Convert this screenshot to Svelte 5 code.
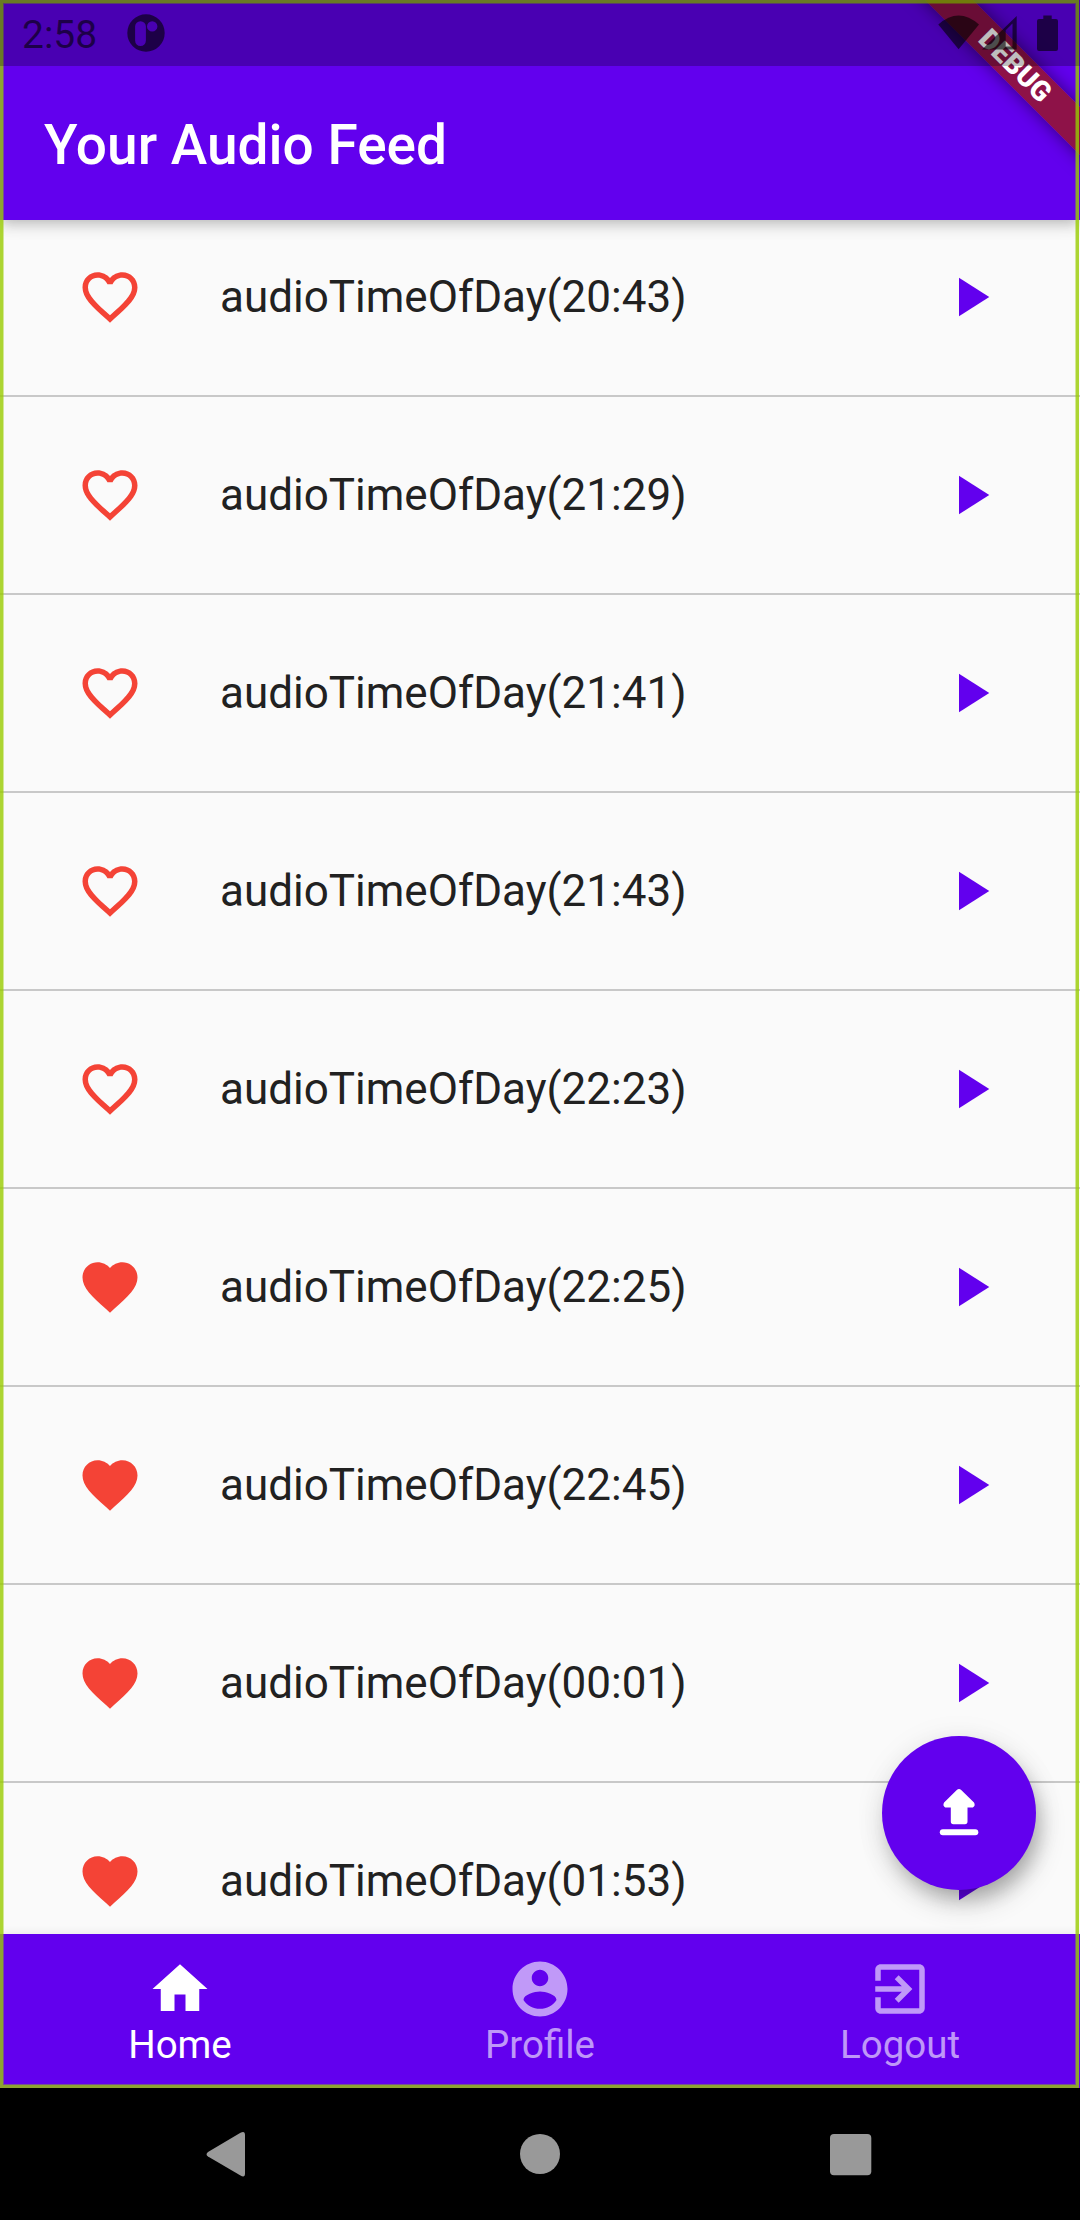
<script>
  const feed = [
    { time: '20:43', liked: false },
    { time: '21:29', liked: false },
    { time: '21:41', liked: false },
    { time: '21:43', liked: false },
    { time: '22:23', liked: false },
    { time: '22:25', liked: true },
    { time: '22:45', liked: true },
    { time: '00:01', liked: true },
    { time: '01:53', liked: true },
  ];

  const tabs = [
    { label: 'Home', active: true, icon: 'M10 20v-6h4v6h5v-8h3L12 3 2 12h3v8z' },
    {
      label: 'Profile',
      active: false,
      icon: 'M12 2C6.48 2 2 6.48 2 12s4.48 10 10 10 10-4.48 10-10S17.52 2 12 2zm0 3c1.66 0 3 1.34 3 3s-1.34 3-3 3-3-1.34-3-3 1.34-3 3-3zm0 14.2c-2.5 0-4.71-1.28-6-3.22.03-1.99 4-3.08 6-3.08 1.99 0 5.97 1.09 6 3.08-1.29 1.94-3.5 3.22-6 3.22z',
    },
    {
      label: 'Logout',
      active: false,
      icon: 'M10.09 15.59L11.5 17l5-5-5-5-1.41 1.41L12.67 11H3v2h9.67l-2.58 2.59zM19 3H5c-1.11 0-2 .9-2 2v4h2V5h14v14H5v-4H3v4c0 1.1.89 2 2 2h14c1.1 0 2-.9 2-2V5c0-1.1-.9-2-2-2z',
    },
  ];

  const heartFilled =
    'M12 21.35l-1.45-1.32C5.4 15.36 2 12.28 2 8.5 2 5.42 4.42 3 7.5 3c1.74 0 3.41.81 4.5 2.09C13.09 3.81 14.76 3 16.5 3 19.58 3 22 5.42 22 8.5c0 3.78-3.4 6.86-8.55 11.54L12 21.35z';
  const heartOutline =
    'M16.5 3c-1.74 0-3.41.81-4.5 2.09C10.91 3.81 9.24 3 7.5 3 4.42 3 2 5.42 2 8.5c0 3.78 3.4 6.86 8.55 11.54L12 21.35l1.45-1.32C18.6 15.36 22 12.28 22 8.5 22 5.42 19.58 3 16.5 3zm-4.4 15.55l-.1.1-.1-.1C7.14 14.24 4 11.39 4 8.5 4 6.5 5.5 5 7.5 5c1.54 0 3.04.99 3.57 2.36h1.87C13.46 5.99 14.96 5 16.5 5c2 0 3.5 1.5 3.5 3.5 0 2.89-3.14 5.74-7.9 10.05z';
</script>

<div class="device">
  <div class="app">
    <header class="appbar"><h1>Your Audio Feed</h1></header>

    <main class="feed">
      {#each feed as item}
        <div class="row">
          <svg class="icon heart" viewBox="0 0 24 24"><path d={item.liked ? heartFilled : heartOutline} /></svg>
          <span class="title">audioTimeOfDay({item.time})</span>
          <svg class="icon play" viewBox="0 0 24 24"><path d="M8 5v14l11-7z" /></svg>
        </div>
      {/each}
    </main>

    <nav class="tabs">
      {#each tabs as tab}
        <div class="tab" class:active={tab.active}>
          <svg class="icon" viewBox="0 0 24 24"><path d={tab.icon} /></svg>
          <span>{tab.label}</span>
        </div>
      {/each}
    </nav>

    <div class="fab">
      <svg viewBox="0 0 154 154">
        <path d="M74.8 54q2.200-2 4.400 0L92 66.600q1.800 3.400-1.200 5H85.500v14q0 2.600-2.600 2.600H71.400q-2.600 0-2.600-2.600v-14h-5.500q-3-1.600-1.200-5z" />
        <rect x="57.800" y="93.300" width="38.500" height="6" rx="3" />
      </svg>
    </div>

    <div class="ribbon-clip"><div class="ribbon">DEBUG</div></div>
    <div class="frame"></div>

    <div class="status">
      <span class="clock">2:58</span>
      <svg class="notice" viewBox="0 0 38 38">
        <path fill-rule="evenodd" d="M19 .3a18.700 18.700 0 1 0 0 37.400a18.700 18.700 0 1 0 0-37.400zM13.500 7.200a5.400 5.400 0 0 1 5.400 5.400v14a5.400 5.400 0 0 1-10.800 0v-14a5.400 5.400 0 0 1 5.400-5.400zM25.200 7.200a5.200 5.200 0 1 1 0 10.400a5.200 5.200 0 1 1 0-10.400z" />
      </svg>
      <svg class="signals" viewBox="0 0 120 40">
        <path d="M0.300 11.500Q20.600-6.500 41 11.500L20.600 36.300z" />
        <path fill-rule="evenodd" d="M78.700 3v33.500H44zM74.500 10.500v23h-6.800V17.300z" />
        <path d="M99 8q0-2 2-2h4.300V2.500h8.400V6H118q2 0 2 2V36q0 2-2 2H101q-2 0-2-2z" />
      </svg>
    </div>
  </div>

  <div class="sysnav">
    <svg viewBox="0 0 1080 132">
      <path d="M240.500 44.700Q245 42.500 245 47V85.500Q245 90 240.500 87.500L208 68.500Q205 66.300 208 64z" />
      <circle cx="540" cy="66" r="20" />
      <rect x="830" y="46" width="41.300" height="41.300" rx="4" />
    </svg>
  </div>
</div>

<style>
  :global(body) {
    margin: 0;
    background: #000;
  }
  .device {
    width: 1080px;
    height: 2220px;
    display: flex;
    flex-direction: column;
    overflow: hidden;
    background: #000;
    font-family: Roboto, 'Liberation Sans', sans-serif;
  }
  .app {
    position: relative;
    height: 2088px;
    display: flex;
    flex-direction: column;
    background: #fafafa;
  }
  .appbar {
    box-sizing: border-box;
    flex: none;
    height: 220px;
    padding: 69px 44px 0;
    display: flex;
    align-items: center;
    background: #6200ee;
    color: #fff;
    position: relative;
    z-index: 1;
    box-shadow: 0 5px 11px -3px rgba(0, 0, 0, 0.16), 0 8px 14px rgba(0, 0, 0, 0.08), 0 3px 20px rgba(0, 0, 0, 0.06);
  }
  h1 {
    margin: 0;
    font-size: 55px;
    font-weight: 500;
    line-height: 64px;
  }
  .feed {
    flex: 1;
    min-height: 0;
    overflow: hidden;
    display: flex;
    flex-direction: column;
    margin-top: -21px;
  }
  .row {
    box-sizing: border-box;
    flex: none;
    height: 198px;
    border-bottom: 2px solid #c8c8c8;
    padding: 0 77px;
    display: flex;
    align-items: center;
  }
  .icon {
    width: 66px;
    height: 66px;
    flex: none;
    fill: currentColor;
  }
  .heart {
    color: #f44336;
  }
  .play {
    color: #6200ee;
  }
  .title {
    flex: 1;
    padding-left: 77px;
    color: #212121;
    font-size: 44px;
    line-height: 52px;
  }
  .tabs {
    flex: none;
    height: 154px;
    display: flex;
    background: #6200ee;
    position: relative;
    box-shadow: 0 -2px 8px rgba(0, 0, 0, 0.06);
  }
  .tab {
    flex: 1;
    display: flex;
    flex-direction: column;
    align-items: center;
    padding-top: 22px;
    color: rgba(255, 255, 255, 0.6);
    font-size: 38.5px;
    line-height: 45px;
  }
  .tab.active {
    color: #fff;
  }
  .fab {
    position: absolute;
    left: 882px;
    top: 1736px;
    width: 154px;
    height: 154px;
    border-radius: 50%;
    background: #6200ee;
    box-shadow: 6px 12px 18px -4px rgba(0, 0, 0, 0.2), 4px 14px 28px rgba(0, 0, 0, 0.16), 0 3px 34px rgba(0, 0, 0, 0.06);
  }
  .fab svg {
    display: block;
    fill: #fff;
  }
  .ribbon-clip {
    position: absolute;
    z-index: 2;
    right: 0;
    top: 0;
    width: 240px;
    height: 220px;
    overflow: hidden;
  }
  .ribbon {
    position: absolute;
    left: 35px;
    top: 49px;
    width: 280px;
    height: 34px;
    transform: rotate(45deg);
    background: rgba(144, 19, 62, 0.94);
    box-shadow: 0 0 17px rgba(0, 0, 0, 0.5);
    color: #fff;
    font-size: 28px;
    font-weight: 900;
    line-height: 34px;
    text-align: center;
  }
  .frame {
    position: absolute;
    z-index: 3;
    inset: 0 1px 0 0;
    border: 3px solid rgba(153, 204, 0, 0.8);
    box-shadow: inset 0 0 0 1px rgba(153, 204, 0, 0.4);
  }
  .status {
    position: absolute;
    z-index: 4;
    inset: 0 0 auto;
    box-sizing: border-box;
    height: 66px;
    padding: 0 22px;
    display: flex;
    align-items: center;
    background: rgba(0, 0, 0, 0.25);
    color: rgba(0, 0, 0, 0.6);
  }
  .clock {
    font-size: 39px;
    line-height: 46px;
    padding-top: 3px;
    width: 105px;
  }
  .notice {
    width: 38px;
    height: 38px;
    fill: currentColor;
  }
  .signals {
    width: 120px;
    height: 40px;
    margin-left: auto;
    fill: currentColor;
  }
  .sysnav {
    height: 132px;
  }
  .sysnav svg {
    display: block;
    fill: #999;
  }
</style>
